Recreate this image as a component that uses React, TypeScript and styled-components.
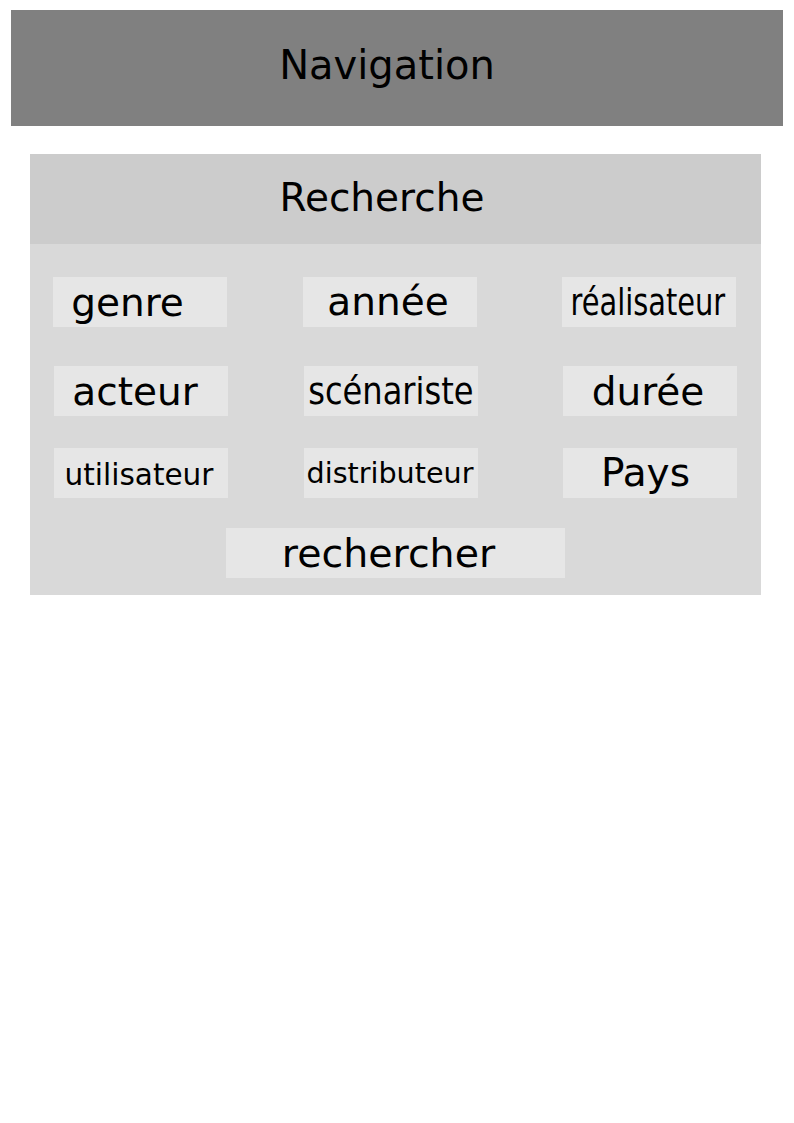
import styled, { createGlobalStyle } from "styled-components";

const GlobalStyle = createGlobalStyle`
    body {
        margin: 0;
        background: #ffffff;
        font-family: "DejaVu Sans", "Liberation Sans", sans-serif;
        color: #000000;
    }
`;

const Page = styled.div`
    padding-top: 10px;
`;

const NavBar = styled.div`
    box-sizing: border-box;
    margin-left: 11px;
    width: 772px;
    height: 116px;
    background-color: #808080;
    display: flex;
    align-items: center;
    justify-content: center;
    font-size: 40px;
    padding: 0 20px 6px 0;
`;

const Panel = styled.section`
    margin: 28px 0 0 30px;
    width: 731px;
    background-color: #d9d9d9;
    padding-bottom: 17px;
`;

const PanelHeader = styled.div`
    box-sizing: border-box;
    height: 90px;
    background-color: #cccccc;
    display: flex;
    align-items: center;
    justify-content: center;
    font-size: 39px;
    padding: 0 27px 4px 0;
`;

const Row = styled.div<{ $top: number; $left: number }>`
    display: grid;
    grid-template-columns: 250px 259px 175px;
    margin-top: ${(p) => p.$top}px;
    padding-left: ${(p) => p.$left}px;
`;

const CenterRow = styled.div<{ $top: number }>`
    display: flex;
    justify-content: center;
    margin-top: ${(p) => p.$top}px;
`;

const Cell = styled.div<{ $size: number; $shift?: number; $dy?: number; $wide?: boolean }>`
    box-sizing: border-box;
    width: ${(p) => (p.$wide ? 339 : 174)}px;
    height: 50px;
    background-color: #e6e6e6;
    display: flex;
    align-items: center;
    justify-content: center;
    white-space: nowrap;
    font-size: ${(p) => p.$size}px;
    padding-right: ${(p) => p.$shift ?? 0}px;
    padding-top: ${(p) => ((p.$dy ?? 0) > 0 ? 2 * (p.$dy ?? 0) : 0)}px;
    padding-bottom: ${(p) => ((p.$dy ?? 0) < 0 ? -2 * (p.$dy ?? 0) : 0)}px;
`;

const Squeezed = styled.span<{ $scale: number }>`
    display: inline-block;
    transform: scaleX(${(p) => p.$scale});
    transform-origin: center;
`;

export default function App() {
    return (
        <Page>
            <GlobalStyle />
            <NavBar>Navigation</NavBar>
            <Panel>
                <PanelHeader>Recherche</PanelHeader>
                <Row $top={33} $left={23}>
                    <Cell $size={39} $shift={25}>genre</Cell>
                    <Cell $size={39} $shift={4} $dy={-1}>année</Cell>
                    <Cell $size={38} $shift={3}>
                        <Squeezed $scale={0.76}>réalisateur</Squeezed>
                    </Cell>
                </Row>
                <Row $top={39} $left={24}>
                    <Cell $size={39} $shift={12}>acteur</Cell>
                    <Cell $size={38}>
                        <Squeezed $scale={0.845}>scénariste</Squeezed>
                    </Cell>
                    <Cell $size={39} $shift={4}>durée</Cell>
                </Row>
                <Row $top={32} $left={24}>
                    <Cell $size={29.5} $shift={4} $dy={2}>utilisateur</Cell>
                    <Cell $size={28.6} $shift={2}>distributeur</Cell>
                    <Cell $size={39} $shift={9} $dy={-1}>Pays</Cell>
                </Row>
                <CenterRow $top={30}>
                    <Cell $wide $size={39.5} $shift={14}>rechercher</Cell>
                </CenterRow>
            </Panel>
        </Page>
    );
}
